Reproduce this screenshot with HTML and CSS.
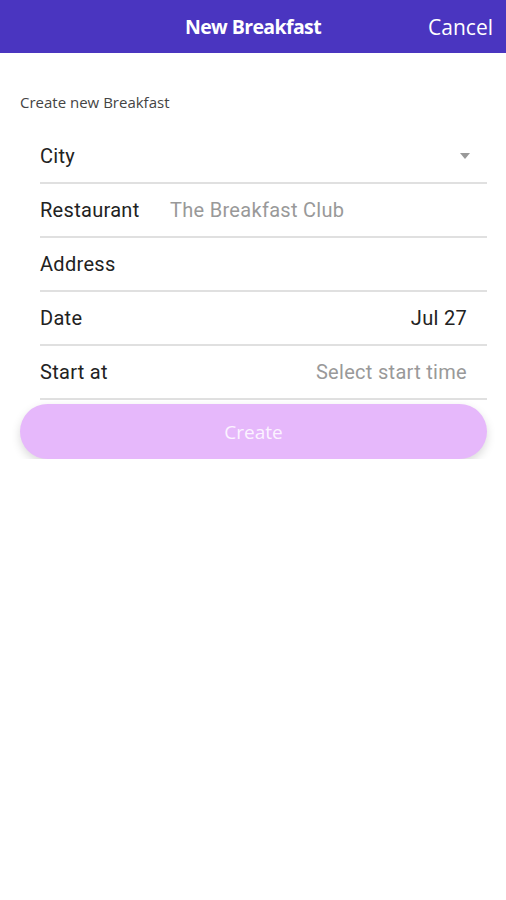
FILE: index.html
```html
<!DOCTYPE html>
<html lang="en">
<head>
    <meta charset="UTF-8">
    <meta name="viewport" content="width=device-width, initial-scale=1.0">
    <title>New Breakfast</title>
    <link rel="stylesheet" href="styles.css">
</head>
<body>
    <header class="topbar">
        <h1 class="topbar-title">New Breakfast</h1>
        <span class="topbar-cancel">Cancel</span>
    </header>

    <main class="content">
        <p class="form-caption">Create new Breakfast</p>

        <form class="breakfast-form">
            <div class="row">
                <span class="row-label">City</span>
                <svg class="dropdown-arrow" width="10" height="6" viewBox="0 0 10 6">
                    <path d="M0 0 L10 0 L5 6 Z" fill="#999"/>
                </svg>
            </div>
            <div class="row">
                <span class="row-label fixed">Restaurant</span>
                <span class="row-placeholder">The Breakfast Club</span>
            </div>
            <div class="row">
                <span class="row-label">Address</span>
            </div>
            <div class="row">
                <span class="row-label">Date</span>
                <span class="row-value">Jul 27</span>
            </div>
            <div class="row">
                <span class="row-label">Start at</span>
                <span class="row-placeholder right">Select start time</span>
            </div>

            <button type="button" class="create-button">Create</button>
        </form>
    </main>
</body>
</html>
```

FILE: styles.css
```css
body {
    margin: 0;
    padding: 0;
    background-color: #fff;
    font-family: 'Roboto', 'Liberation Sans', sans-serif;
}

.topbar {
    height: 53px;
    background-color: #4a35c0;
    display: flex;
    align-items: center;
    justify-content: center;
    position: relative;
}

.topbar-title {
    margin: 0;
    color: #fff;
    font-family: 'Open Sans', sans-serif;
    font-size: 19.5px;
    font-weight: 700;
    letter-spacing: -0.6px;
}

.topbar-cancel {
    position: absolute;
    right: 13px;
    top: 13px;
    color: #fff;
    font-family: 'Open Sans', sans-serif;
    font-size: 21px;
}

.content {
    padding: 0 19px 0 20px;
}

.form-caption {
    margin: 39px 0 18px;
    height: 20px;
    line-height: 20px;
    font-family: 'Open Sans', sans-serif;
    font-size: 15px;
    color: #444;
}

.breakfast-form {
    display: flex;
    flex-direction: column;
}

.row {
    margin-left: 20px;
    height: 52px;
    border-bottom: 2px solid #e0e0e0;
    display: flex;
    align-items: center;
    padding-right: 20px;
    font-size: 20px;
    letter-spacing: 0.3px;
    color: #222;
}

.row-label {
    flex: none;
}

.row-label.fixed {
    width: 130px;
}

.row-placeholder {
    color: #999;
}

.row-placeholder.right,
.row-value {
    margin-left: auto;
}

.row-value {
    color: #222;
}

.dropdown-arrow {
    margin-left: auto;
    margin-right: -3px;
}

.create-button {
    margin-top: 4px;
    height: 55px;
    border: none;
    border-radius: 28px;
    background-color: #e6b8fb;
    color: #fbf3ff;
    font-family: 'Open Sans', sans-serif;
    font-size: 19px;
    box-shadow: 0 4px 10px rgba(0, 0, 0, 0.15);
    cursor: pointer;
}
```
